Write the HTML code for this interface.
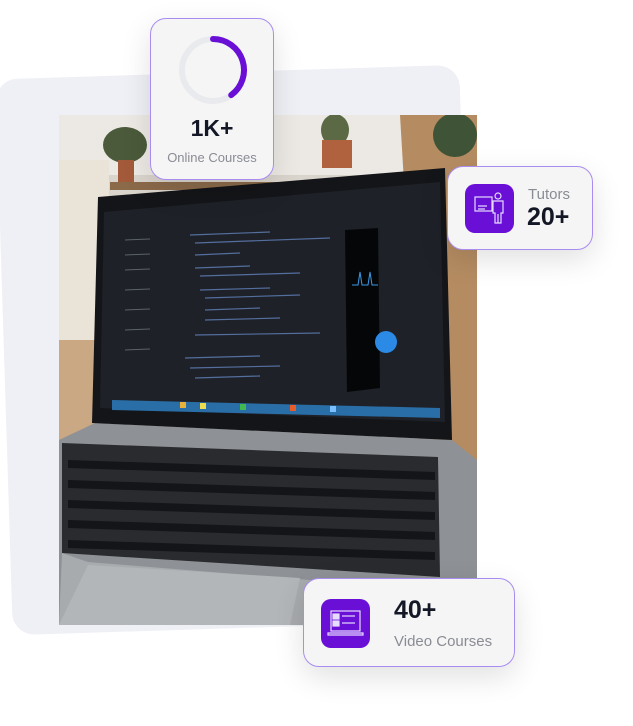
<!DOCTYPE html>
<html><head><meta charset="utf-8"><style>
*{margin:0;padding:0;box-sizing:border-box}
body{width:633px;height:726px;background:#fff;position:relative;overflow:hidden;font-family:"Liberation Sans",sans-serif}
.panel{position:absolute;left:4px;top:72px;width:464px;height:556px;background:#eff0f5;border-radius:22px;transform:rotate(-1.8deg)}
.photo{position:absolute;left:59px;top:115px;width:418px;height:510px;overflow:hidden}
.card{position:absolute;background:#f5f5f5;border:1px solid #a98cf0;border-radius:16px;box-shadow:0 10px 30px rgba(0,0,0,.12)}
.ic{position:absolute;width:49px;height:49px;background:#6a0fd6;border-radius:10px}
.num{font-weight:bold;color:#141826}
.lbl{color:#8a8c94}
</style></head><body>
<div class="panel"></div>
<div class="photo">
<svg width="418" height="510" viewBox="59 115 418 510">
<rect x="59" y="115" width="418" height="510" fill="#d9d4cc"/>
<rect x="59" y="115" width="418" height="60" fill="#ece9e4"/>
<polygon points="400,115 477,115 477,625 430,625" fill="#b58c62"/>
<polygon points="59,320 100,330 100,625 59,625" fill="#c9a883"/>
<rect x="59" y="160" width="50" height="180" fill="#eae4d8"/>
<ellipse cx="125" cy="145" rx="22" ry="18" fill="#4a5a3a"/>
<rect x="118" y="160" width="16" height="22" fill="#a35a3a"/>
<ellipse cx="335" cy="130" rx="14" ry="16" fill="#5b6a44"/>
<rect x="322" y="140" width="30" height="28" fill="#b0623e"/>
<ellipse cx="455" cy="135" rx="22" ry="22" fill="#3f5336"/>
<rect x="110" y="182" width="330" height="8" fill="#8b6a4a"/>
<polygon points="59,440 95,423 452,440 477,460 477,625 59,625" fill="#8e9195"/>
<polygon points="98,197 445,168 452,440 92,423" fill="#141518"/>
<polygon points="104,212 440,182 445,422 100,408" fill="#1e2128"/>
<g stroke="#6c8fd0" stroke-width="1.2" opacity=".7">
<line x1="190" y1="235" x2="270" y2="232"/><line x1="195" y1="243" x2="330" y2="238"/><line x1="195" y1="255" x2="240" y2="253"/>
<line x1="195" y1="268" x2="250" y2="266"/><line x1="200" y1="276" x2="300" y2="273"/><line x1="200" y1="290" x2="270" y2="288"/>
<line x1="205" y1="298" x2="300" y2="295"/><line x1="205" y1="310" x2="260" y2="308"/><line x1="205" y1="320" x2="280" y2="318"/>
<line x1="195" y1="335" x2="320" y2="333"/><line x1="185" y1="358" x2="260" y2="356"/><line x1="190" y1="368" x2="280" y2="366"/><line x1="195" y1="378" x2="260" y2="376"/>
</g>
<g stroke="#9aa0a8" stroke-width="1" opacity=".5">
<line x1="125" y1="240" x2="150" y2="239"/><line x1="125" y1="255" x2="150" y2="254"/><line x1="125" y1="270" x2="150" y2="269"/><line x1="125" y1="290" x2="150" y2="289"/><line x1="125" y1="310" x2="150" y2="309"/><line x1="125" y1="330" x2="150" y2="329"/><line x1="125" y1="350" x2="150" y2="349"/>
</g>
<polygon points="345,230 378,228 380,388 347,392" fill="#050608"/>
<polyline points="352,285 358,285 360,272 362,285 368,285 370,272 372,285 378,285" fill="none" stroke="#3a9ae6" stroke-width="1"/>
<circle cx="386" cy="342" r="11" fill="#2a8ae6"/>
<polygon points="112,400 440,408 440,418 112,410" fill="#2a6ea8"/>
<g fill="#e8b13a"><rect x="180" y="402" width="6" height="6"/><rect x="200" y="403" width="6" height="6" fill="#eedc50"/><rect x="240" y="404" width="6" height="6" fill="#3fb950"/><rect x="290" y="405" width="6" height="6" fill="#e65c2a"/><rect x="330" y="406" width="6" height="6" fill="#7ac0ff"/></g>
<polygon points="62,443 438,457 440,577 62,553" fill="#2a2b2e"/>
<g fill="#141518">
<polygon points="68,460 435,472 435,480 68,468"/><polygon points="68,480 435,492 435,500 68,488"/><polygon points="68,500 435,512 435,520 68,508"/><polygon points="68,520 435,532 435,540 68,528"/><polygon points="68,540 435,552 435,560 68,548"/>
</g>
<polygon points="62,553 88,562 310,580 440,585 477,590 477,625 59,625" fill="#a8abad"/>
<polygon points="88,565 300,578 290,625 59,625" fill="#b3b6b8"/>
</svg>
</div>

<div class="card" style="left:150px;top:18px;width:124px;height:162px">
<svg style="position:absolute;left:26px;top:15px" width="72" height="72" viewBox="0 0 72 72">
<circle cx="36" cy="36" r="31" fill="none" stroke="#e9eaee" stroke-width="6"/>
<path d="M36 5 A31 31 0 0 1 54.2 61.1" fill="none" stroke="#6a0fd6" stroke-width="6" stroke-linecap="round"/>
</svg>
<div class="num" style="position:absolute;left:0;right:0;top:96px;text-align:center;font-size:23px">1K+</div>
<div class="lbl" style="position:absolute;left:0;right:0;top:131px;text-align:center;font-size:13px">Online Courses</div>
</div>

<div class="card" style="left:447px;top:166px;width:146px;height:84px">
<div class="ic" style="left:17px;top:17px">
<svg width="49" height="49" viewBox="0 0 49 49" fill="none" stroke="#e6dcff" stroke-width="1.2">
<rect x="10" y="13" width="17" height="14"/><line x1="13" y1="22" x2="22" y2="22"/><line x1="13" y1="25" x2="20" y2="25"/>
<circle cx="33" cy="12" r="3"/><path d="M28 17h10v12h-2v10h-6V29h-2z"/><line x1="33" y1="30" x2="33" y2="39"/>
</svg></div>
<div class="lbl" style="position:absolute;left:80px;top:19px;font-size:15px">Tutors</div>
<div class="num" style="position:absolute;left:79px;top:36px;font-size:25px">20+</div>
</div>

<div class="card" style="left:303px;top:578px;width:212px;height:89px">
<div class="ic" style="left:17px;top:20px">
<svg width="49" height="49" viewBox="0 0 49 49" fill="none" stroke="#e6dcff" stroke-width="1.2">
<rect x="10" y="12" width="29" height="20"/><rect x="12" y="15" width="6" height="5" fill="#e6dcff"/><rect x="12" y="22" width="6" height="5" fill="#e6dcff"/>
<line x1="21" y1="17" x2="34" y2="17"/><line x1="21" y1="24" x2="34" y2="24"/><path d="M7 34h35v2H7z"/>
</svg></div>
<div class="num" style="position:absolute;left:90px;top:17px;font-size:25px">40+</div>
<div class="lbl" style="position:absolute;left:90px;top:54px;font-size:15px">Video Courses</div>
</div>
</body></html>
